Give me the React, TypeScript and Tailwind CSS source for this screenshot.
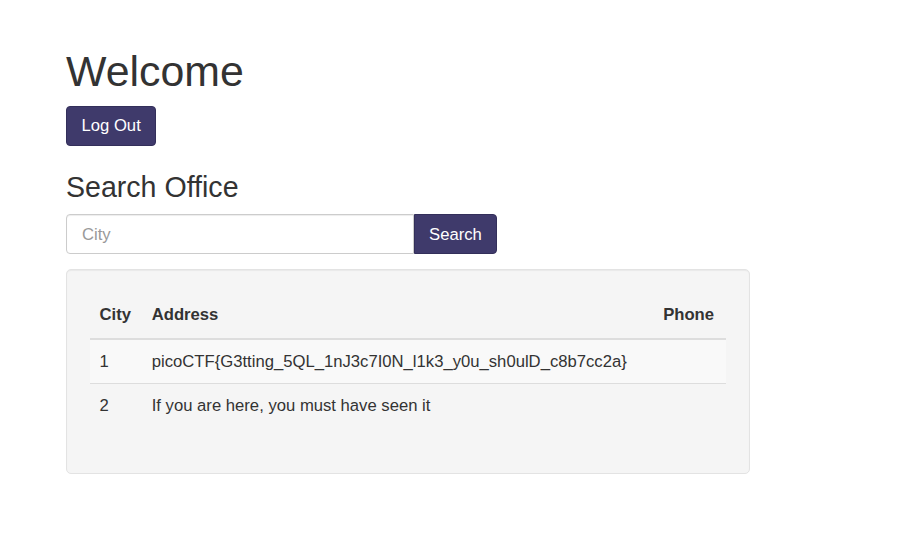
export default function App() {
  return (
    <div className="min-h-screen bg-white text-[#333] font-['Liberation_Sans',Arial,sans-serif] text-[16.67px] leading-[23.8px]">
      <div className="pl-[66px] pt-[48px] w-[750px]">
        <h1 className="text-[42.86px] leading-[47.1px] mb-[11px]">Welcome</h1>
        <button className="h-[40px] px-[14.5px] bg-[#3f3a6b] border border-[#332f5a] rounded-[4px] text-white text-[16.67px]">
          Log Out
        </button>

        <h3 className="mt-[26px] text-[28.57px] leading-[31.4px] mb-[10px]">Search Office</h3>
        <form className="flex mb-[15px]" onSubmit={(e) => e.preventDefault()}>
          <input
            placeholder="City"
            className="w-[348px] h-[40px] px-[15px] pt-[2px] border border-[#ccc] rounded-l-[4px] shadow-[inset_0_1px_1px_rgba(0,0,0,0.075)] placeholder:text-[#999] outline-none"
          />
          <button className="w-[83px] h-[40px] pt-[2px] bg-[#3f3a6b] border border-[#332f5a] rounded-r-[4px] text-white">
            Search
          </button>
        </form>

        <div className="w-[684px] bg-[#f5f5f5] border border-[#e3e3e3] rounded-[5px] shadow-[inset_0_1px_1px_rgba(0,0,0,0.05)] px-[23px] pt-[25px] pb-[22px]">
          <table className="w-full border-collapse mb-[24px]">
            <thead>
              <tr>
                <th className="text-left font-bold px-[9.5px] pt-[8.5px] pb-[11.5px] border-b-[2.4px] border-[#ddd]">City</th>
                <th className="text-left font-bold px-[9.5px] pt-[8.5px] pb-[11.5px] border-b-[2.4px] border-[#ddd]">Address</th>
                <th className="text-left font-bold px-[9.5px] pt-[8.5px] pb-[11.5px] border-b-[2.4px] border-[#ddd]">Phone</th>
              </tr>
            </thead>
            <tbody>
              <tr className="bg-[#f9f9f9]">
                <td className="px-[9.5px] py-[9.5px] border-b border-[#ddd]">1</td>
                <td className="px-[9.5px] py-[9.5px] border-b border-[#ddd]">picoCTF{"{"}G3tting_5QL_1nJ3c7I0N_l1k3_y0u_sh0ulD_c8b7cc2a{"}"}</td>
                <td className="px-[9.5px] py-[9.5px] border-b border-[#ddd]"></td>
              </tr>
              <tr>
                <td className="px-[9.5px] py-[9.5px]">2</td>
                <td className="px-[9.5px] py-[9.5px]">If you are here, you must have seen it</td>
                <td className="px-[9.5px] py-[9.5px]"></td>
              </tr>
            </tbody>
          </table>
        </div>
      </div>
    </div>
  );
}
